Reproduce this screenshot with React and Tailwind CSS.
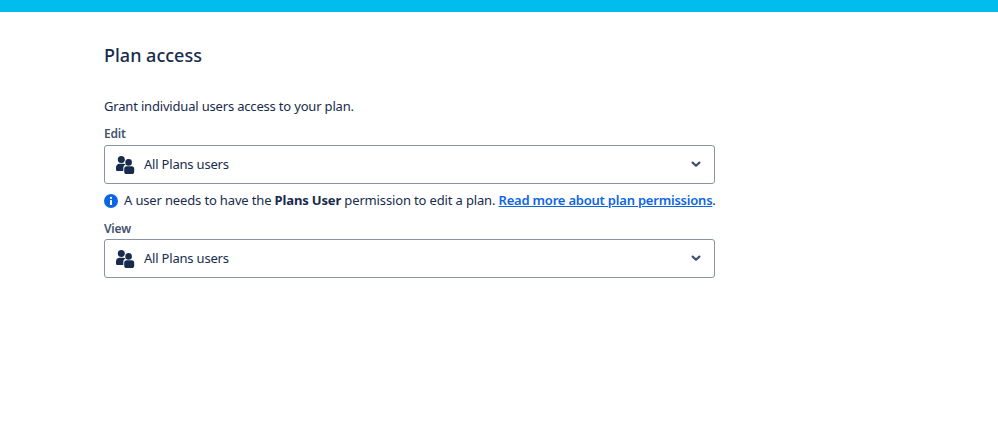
const GroupIcon = () => (
  <svg width="20" height="20" viewBox="0 0 20 20" className="shrink-0 text-[#172b4d]" fill="currentColor">
    <circle cx="6.3" cy="4.4" r="3.5" />
    <path d="M1 12.6c0-2.3 1.6-3.9 3.6-3.9h3.8c.9 0 1.7.3 2.3.8-1.4.6-2.4 1.9-2.4 3.5v3H2.6c-.9 0-1.6-.7-1.6-1.6z" />
    <circle cx="13.6" cy="7.4" r="3.3" />
    <rect x="9.2" y="11.2" width="10" height="7.9" rx="2.6" />
  </svg>
);

const Chevron = () => (
  <svg width="10" height="7" viewBox="0 0 10 7" className="shrink-0 text-[#42526e]" fill="none" stroke="currentColor" strokeWidth="2.2" strokeLinecap="round" strokeLinejoin="round">
    <path d="M1.6 1.6L5 4.8l3.4-3.2" />
  </svg>
);

const InfoIcon = () => (
  <svg width="14" height="14" viewBox="0 0 14 14" className="shrink-0">
    <circle cx="7" cy="7" r="7" fill="#0c66e4" />
    <circle cx="7" cy="3.9" r="1.1" fill="#fff" />
    <rect x="6" y="6" width="2" height="5" rx="0.5" fill="#fff" />
  </svg>
);

const Select = () => (
  <div className="flex h-[39px] w-[611px] items-center justify-between rounded-[3px] border border-[#8993a4] bg-white pl-[10px] pr-[13px]">
    <div className="flex items-center gap-[9px]">
      <GroupIcon />
      <span className="text-[13px] tracking-[-0.2px] text-[#172b4d]">All Plans users</span>
    </div>
    <Chevron />
  </div>
);

export default function App() {
  return (
    <div className="min-h-[421px] bg-white font-['Noto_Sans','Open_Sans',sans-serif]">
      <div className="h-[12px] bg-[#00bdee]" />
      <div className="pl-[104px]">
        <h1 className="mt-[30px] text-[18px] leading-[26px] font-medium text-[#172b4d]">Plan access</h1>
        <p className="mt-[28px] text-[13px] leading-[20px] tracking-[-0.18px] text-[#172b4d]">Grant individual users access to your plan.</p>
        <div className="mt-[10px] text-[12px] leading-[16px] font-semibold tracking-[-0.2px] text-[#42526e]">Edit</div>
        <div className="mt-[3px]"><Select /></div>
        <div className="mt-[7px] flex h-[20px] items-center gap-[6px] text-[13px] tracking-[-0.15px] text-[#172b4d]">
          <InfoIcon />
          <span>
            A user needs to have the <b className="font-bold">Plans User</b> permission to edit a plan.{' '}
            <a className="font-semibold tracking-[-0.21px] text-[#0c66e4] underline">Read more about plan permissions</a>.
          </span>
        </div>
        <div className="mt-[10px] text-[12px] leading-[16px] font-semibold tracking-[-0.2px] text-[#42526e]">View</div>
        <div className="mt-[2px]"><Select /></div>
      </div>
    </div>
  );
}
